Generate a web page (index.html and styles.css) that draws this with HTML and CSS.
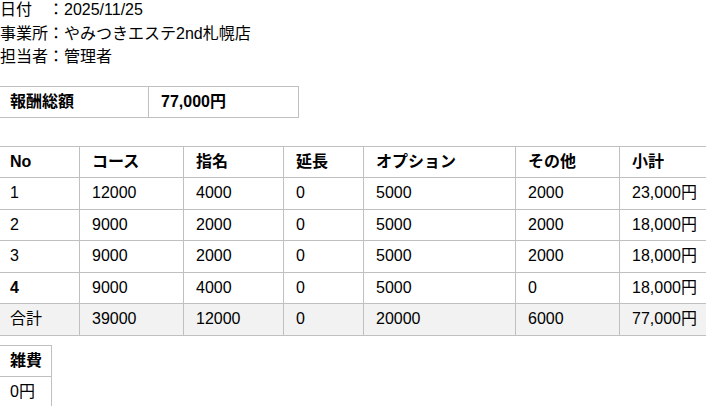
FILE: index.html
```html
<!DOCTYPE html>
<html lang="ja">
<head>
<meta charset="utf-8">
<title>報酬明細</title>
<link rel="stylesheet" href="styles.css">
</head>
<body>
<div class="info">
  <div>日付　：2025/11/25</div>
  <div>事業所：やみつきエステ2nd札幌店</div>
  <div>担当者：管理者</div>
</div>

<table class="grid summary">
  <colgroup><col class="s1"><col class="s2"></colgroup>
  <tr><th>報酬総額</th><th>77,000円</th></tr>
</table>

<table class="grid main">
  <colgroup>
    <col class="c1"><col class="c2"><col class="c3"><col class="c4"><col class="c5"><col class="c6"><col class="c7">
  </colgroup>
  <thead>
    <tr><th>No</th><th>コース</th><th>指名</th><th>延長</th><th>オプション</th><th>その他</th><th>小計</th></tr>
  </thead>
  <tbody>
    <tr><td>1</td><td>12000</td><td>4000</td><td>0</td><td>5000</td><td>2000</td><td>23,000円</td></tr>
    <tr><td>2</td><td>9000</td><td>2000</td><td>0</td><td>5000</td><td>2000</td><td>18,000円</td></tr>
    <tr><td>3</td><td>9000</td><td>2000</td><td>0</td><td>5000</td><td>2000</td><td>18,000円</td></tr>
    <tr><td class="strong">4</td><td>9000</td><td>4000</td><td>0</td><td>5000</td><td>0</td><td>18,000円</td></tr>
    <tr class="total"><td>合計</td><td>39000</td><td>12000</td><td>0</td><td>20000</td><td>6000</td><td>77,000円</td></tr>
  </tbody>
</table>

<table class="grid misc">
  <tr><th>雑費</th></tr>
  <tr><td>0円</td></tr>
</table>
</body>
</html>
```

FILE: styles.css
```css
html, body {
  margin: 0;
  padding: 0;
  overflow: hidden;
  background: #fff;
}

body {
  font-family: "Liberation Sans", "Noto Sans CJK JP", sans-serif;
  font-size: 16px;
  color: #000;
}

.info {
  margin-top: -2px;
  line-height: 23.5px;
}

.grid {
  border-collapse: collapse;
  table-layout: fixed;
  margin-left: -3px;
}

.grid th,
.grid td {
  border: 1px solid #c0c0c0;
  padding: 4px 12px 4px;
  line-height: 22px;
  text-align: left;
  white-space: nowrap;
  font-weight: normal;
}

.grid th {
  font-weight: bold;
}

.main tbody tr:nth-child(odd) td {
  padding-bottom: 5px;
}

.summary {
  margin-top: 17px;
  width: 301px;
}

.summary .s1 { width: 151px; }
.summary .s2 { width: 150px; }

.main {
  margin-top: 28px;
  width: 720px;
}

.main .c1 { width: 82px; }
.main .c2 { width: 104px; }
.main .c3 { width: 100px; }
.main .c4 { width: 80px; }
.main .c5 { width: 152px; }
.main .c6 { width: 104px; }
.main .c7 { width: 98px; }

.main td.strong {
  font-weight: bold;
}

.main tr.total td {
  background: #f2f2f2;
}

.misc {
  margin-top: 9px;
  width: 55px;
}
```
